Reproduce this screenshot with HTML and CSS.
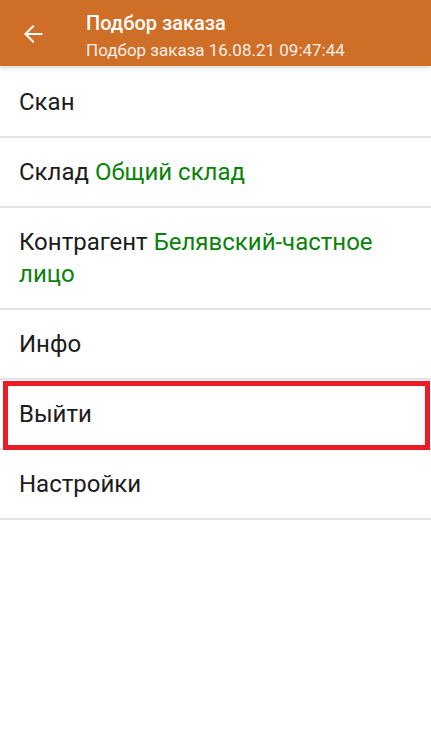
FILE: index.html
```html
<!DOCTYPE html>
<html lang="ru">
<head>
  <meta charset="UTF-8">
  <meta name="viewport" content="width=device-width, initial-scale=1.0">
  <title>Подбор заказа</title>
  <link rel="stylesheet" href="styles.css">
</head>
<body>
  <header class="topbar">
    <div class="back">
      <svg width="28" height="28" viewBox="0 0 24 24"><path d="M20 11.1H7.6l5.6-5.6L12 4.3 4.3 12l7.7 7.7 1.2-1.2-5.6-5.6H20z" fill="#fff"/></svg>
    </div>
    <div class="titles">
      <h1>Подбор заказа</h1>
      <div class="subtitle">Подбор заказа 16.08.21 09:47:44</div>
    </div>
  </header>
  <main class="menu">
    <div class="item">Скан</div>
    <div class="item">Склад <span class="value">Общий склад</span></div>
    <div class="item">Контрагент <span class="value">Белявский-частное лицо</span></div>
    <div class="item">Инфо</div>
    <div class="item selected">Выйти</div>
    <div class="item">Настройки</div>
  </main>
</body>
</html>
```

FILE: styles.css
```css
body {
  margin: 0;
  padding: 0;
  background-color: #fff;
  font-family: Roboto, "Noto Sans", sans-serif;
  color: #1c1c1c;
}
.topbar {
  height: 66px;
  background-color: #cf6f27;
  display: flex;
  align-items: flex-start;
  box-shadow: 0 2px 4px rgba(0, 0, 0, 0.15);
  position: relative;
}
.back {
  width: 66px;
  height: 68px;
  display: flex;
  align-items: center;
  justify-content: center;
}
.titles {
  margin-left: 20px;
  padding-top: 10px;
  color: #fff;
}
.titles h1 {
  margin: 0;
  font-size: 20px;
  font-weight: 500;
  line-height: 26px;
}
.subtitle {
  margin-top: 4px;
  font-size: 17px;
  line-height: 20px;
  color: #f6eee8;
}
.menu {
  padding-top: 2px;
}
.item {
  padding: 18px 19px;
  font-size: 24px;
  line-height: 32px;
  border-bottom: 2px solid #e3e3e3;
  position: relative;
}
.value {
  color: #0a820a;
}
.selected::after {
  content: "";
  position: absolute;
  top: 1px;
  left: 3px;
  right: 1px;
  bottom: -2px;
  border: 5px solid #ed1c24;
}
```
